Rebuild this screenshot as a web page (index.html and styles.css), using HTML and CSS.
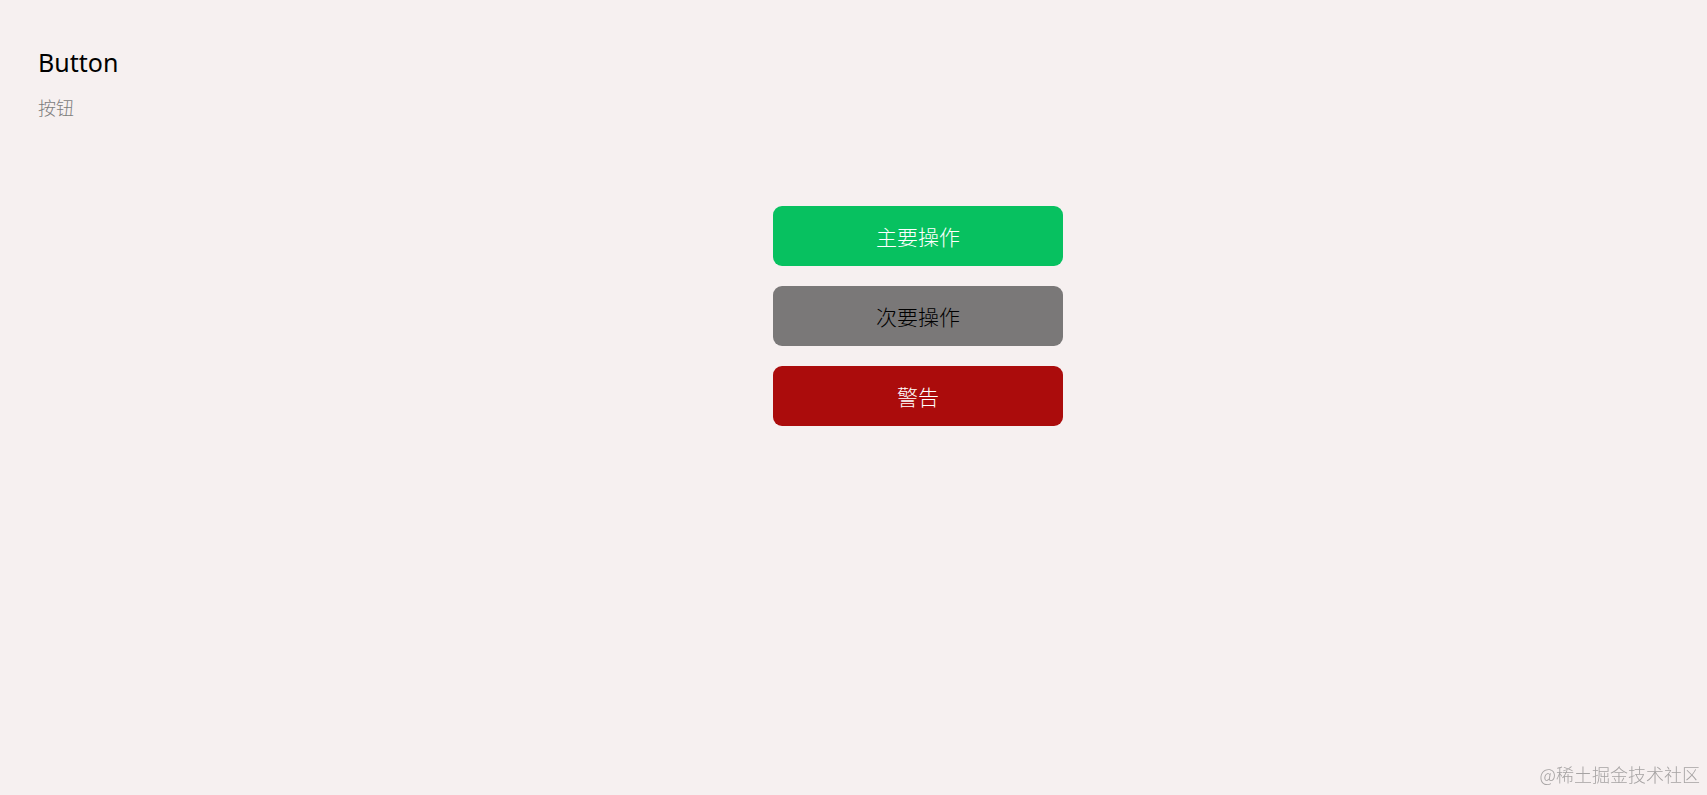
FILE: index.html
```html
<!DOCTYPE html>
<html lang="zh">
<head>
<meta charset="utf-8">
<link rel="stylesheet" href="styles.css">
</head>
<body>
<div class="page">
  <header class="head">
    <h1 class="title">Button</h1>
    <p class="desc">按钮</p>
  </header>
  <div class="buttons">
    <button class="btn btn-primary">主要操作</button>
    <button class="btn btn-default">次要操作</button>
    <button class="btn btn-warn">警告</button>
  </div>
</div>
<div class="watermark">@稀土掘金技术社区</div>
</body>
</html>
```
FILE: styles.css
```css
html, body {
  margin: 0;
  padding: 0;
  height: 100%;
  background: #f6f0f0;
  font-family: "Noto Sans", "Noto Sans CJK SC", sans-serif;
}
.page {
  padding: 45px 38px 0;
}
.head {
  display: flex;
  flex-direction: column;
}
.title {
  margin: 0;
  font-size: 25px;
  font-weight: 400;
  line-height: 34px;
  color: #000;
}
.desc {
  margin: 17px 0 0;
  font-size: 18px;
  line-height: 23px;
  color: #7d7d7d;
  font-family: "Noto Sans CJK SC", sans-serif;
  font-weight: 300;
}
.buttons {
  display: flex;
  flex-direction: column;
  gap: 20px;
  width: 290px;
  margin: 87px 0 0 735px;
}
.btn {
  display: block;
  height: 60px;
  border: 0;
  border-radius: 9px;
  font-family: "Noto Sans CJK SC", sans-serif;
  font-size: 21px;
  font-weight: 300;
  padding: 0;
}
.btn-primary { background: #07c160; color: #fff; }
.btn-default { background: #7a7878; color: #000; }
.btn-warn { background: #ab0c0c; color: #fff; }
.watermark {
  position: fixed;
  right: 7px;
  bottom: 8px;
  font-family: "Noto Sans CJK SC", serif;
  font-size: 18px;
  font-weight: 300;
  color: #a6a3a3;
}
```
